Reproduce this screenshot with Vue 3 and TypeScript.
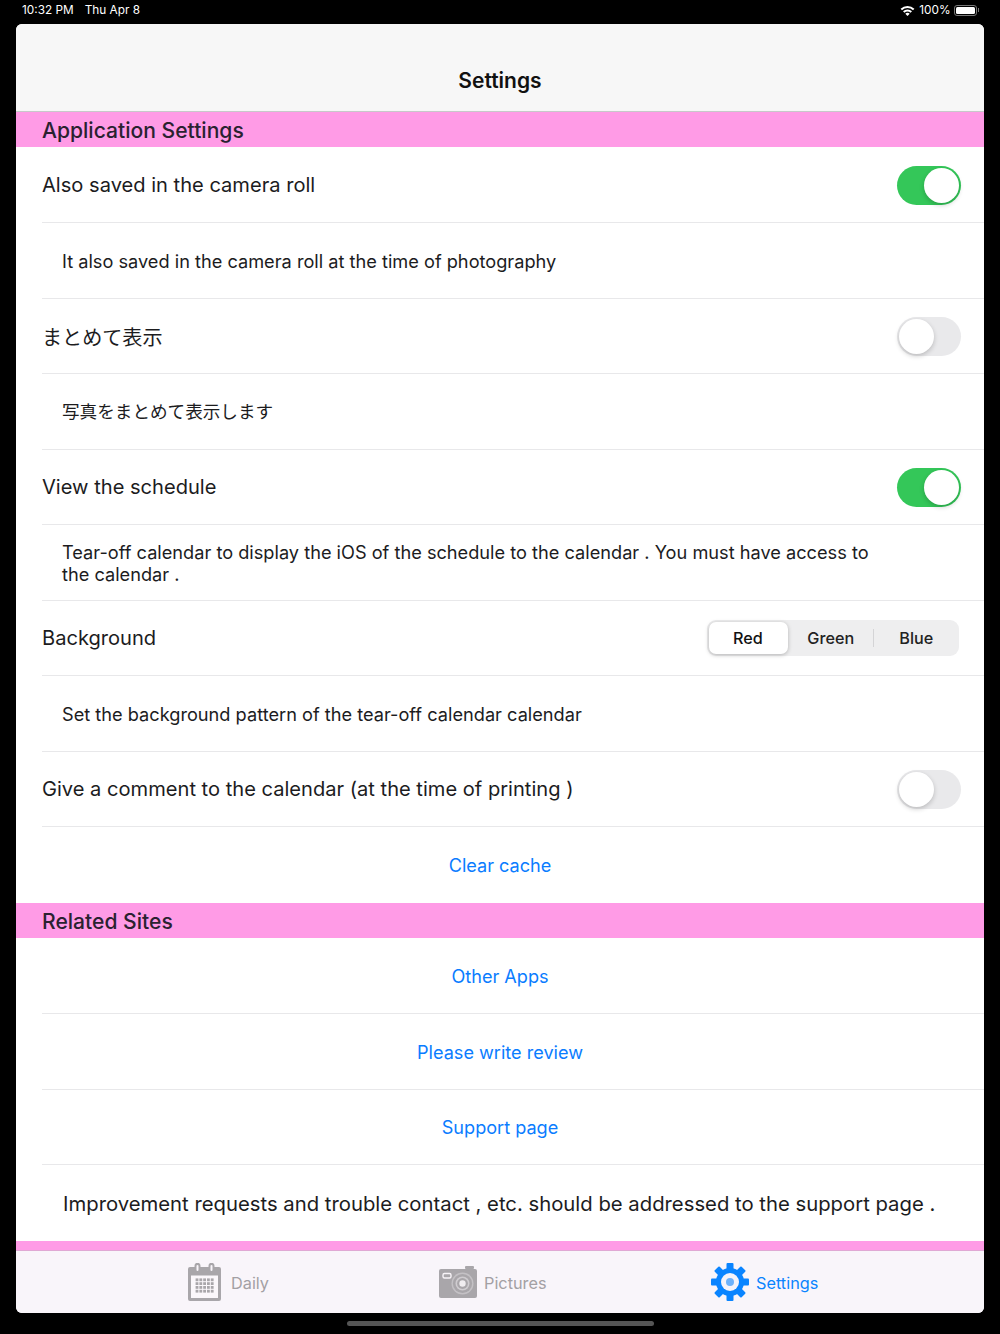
<script setup lang="ts">
interface Row { label: string; kind: 'toggle' | 'note' | 'segment' | 'link' | 'plain'; on?: boolean; last?: boolean; cjk?: boolean }
const settings: Row[] = [
  { label: 'Also saved in the camera roll', kind: 'toggle', on: true },
  { label: 'It also saved in the camera roll at the time of photography', kind: 'note' },
  { label: 'まとめて表示', kind: 'toggle', on: false },
  { label: '写真をまとめて表示します', kind: 'note', cjk: true },
  { label: 'View the schedule', kind: 'toggle', on: true },
  { label: 'Tear-off calendar to display the iOS of the schedule to the calendar . You must have access to the calendar .', kind: 'note' },
  { label: 'Background', kind: 'segment' },
  { label: 'Set the background pattern of the tear-off calendar calendar', kind: 'note' },
  { label: 'Give a comment to the calendar (at the time of printing )', kind: 'toggle', on: false },
  { label: 'Clear cache', kind: 'link', last: true }
]
const related: Row[] = [
  { label: 'Other Apps', kind: 'link' },
  { label: 'Please write review', kind: 'link' },
  { label: 'Support page', kind: 'link' },
  { label: 'Improvement requests and trouble contact , etc. should be addressed to the support page .', kind: 'plain', last: true }
]
const calDots: { x: number; y: number }[] = []
for (let r = 0; r < 4; r++) for (let c = 0; c < 5; c++) calDots.push({ x: 7.6 + c * 3.8, y: 15.4 + r * 3.8 })
const gearTeeth = [0, 45, 90, 135, 180, 225, 270, 315]
</script>

<template>
  <div class="screen">
    <div class="status">
      <div class="status-left"><span>10:32 PM</span><span>Thu Apr 8</span></div>
      <div class="status-right">
        <svg class="wifi" width="15" height="11" viewBox="0 0 15 11">
          <path d="M0.6 3.8A10 10 0 0 1 14.4 3.8L13 5.3A8 8 0 0 0 2 5.3Z" fill="#fff" />
          <path d="M3 6.3A6.6 6.6 0 0 1 12 6.3L10.6 7.8A4.6 4.6 0 0 0 4.4 7.8Z" fill="#fff" />
          <path d="M5.3 8.7A3.2 3.2 0 0 1 9.7 8.7L7.5 11Z" fill="#fff" />
        </svg>
        <span>100%</span>
        <span class="battery"><span class="battery-fill"></span></span>
        <span class="battery-cap"></span>
      </div>
    </div>

    <div class="sheet">
      <header class="nav">Settings</header>
      <div class="section">Application Settings</div>
      <div v-for="row in settings" :key="row.label" class="row" :class="[row.kind, { last: row.last, cjk: row.cjk }]">
        <span class="label">{{ row.label }}</span>
        <span v-if="row.kind === 'toggle'" class="switch" :class="{ on: row.on }"><span class="knob"></span></span>
        <div v-if="row.kind === 'segment'" class="seg">
          <span class="seg-item active">Red</span>
          <span class="seg-item">Green</span>
          <span class="seg-sep"></span>
          <span class="seg-item">Blue</span>
        </div>
      </div>
      <div class="section second">Related Sites</div>
      <div v-for="row in related" :key="row.label" class="row" :class="[row.kind, { last: row.last }]">
        <span class="label">{{ row.label }}</span>
      </div>
      <div class="footer-band"></div>
      <nav class="tabs">
        <div class="tab tab-daily">
          <svg width="33" height="38" viewBox="0 0 33 38">
            <path fill="#a9a6aa" fill-rule="evenodd" d="M2 4H6.5V2.8a3 3 0 0 1 6 0V4H20.5V2.8a3 3 0 0 1 6 0V4H31a2 2 0 0 1 2 2V36a2 2 0 0 1-2 2H2a2 2 0 0 1-2-2V6A2 2 0 0 1 2 4ZM8.5 3V7a1 1 0 0 0 2 0V3a1 1 0 0 0-2 0ZM22.5 3V7a1 1 0 0 0 2 0V3a1 1 0 0 0-2 0Z" />
            <rect x="3" y="12.5" width="27" height="22.5" fill="#fbf7fb" />
            <g fill="#a9a6aa">
              <rect v-for="d in calDots" :key="d.x + '-' + d.y" :x="d.x" :y="d.y" width="2.8" height="2.8" />
            </g>
          </svg>
          <span class="tab-text">Daily</span>
        </div>
        <div class="tab tab-pictures">
          <svg width="38" height="32" viewBox="0 0 38 32">
            <rect x="26" y="0" width="9" height="3" rx="1" fill="#a9a6aa" />
            <rect x="0" y="3" width="38" height="29" rx="2" fill="#a9a6aa" />
            <rect x="4" y="7.5" width="8" height="4.5" rx="1.5" fill="none" stroke="#f8f4f8" stroke-width="1.4" />
            <circle cx="23.5" cy="17.5" r="11" fill="#c4c1c5" />
            <circle cx="23.5" cy="17.5" r="9.6" fill="#a9a6aa" />
            <circle cx="23.5" cy="17.5" r="7" fill="#cfccd0" />
            <circle cx="23.5" cy="17.5" r="5.4" fill="#a9a6aa" />
            <circle cx="23.5" cy="17.5" r="3.2" fill="#f0edf0" />
          </svg>
          <span class="tab-text">Pictures</span>
        </div>
        <div class="tab tab-settings">
          <svg width="38" height="38" viewBox="0 0 38 38">
            <g fill="#0a84ff">
              <rect v-for="a in gearTeeth" :key="a" x="15.5" y="0" width="7" height="9" rx="1" :transform="`rotate(${a} 19 19)`" />
              <circle cx="19" cy="19" r="14" />
            </g>
            <circle cx="19" cy="19" r="9" fill="#f5f3fa" />
            <circle cx="19" cy="19" r="4" fill="#6db1fb" />
          </svg>
          <span class="tab-text active">Settings</span>
        </div>
      </nav>
    </div>
    <div class="home"><span class="home-bar"></span></div>
  </div>
</template>

<style>
html, body { margin: 0; background: #000; }
</style>

<style scoped>
.screen {
  width: 1000px;
  height: 1334px;
  background: #000;
  overflow: hidden;
  display: flex;
  flex-direction: column;
  font-family: Inter, "Noto Sans CJK JP", sans-serif;
  color: #1c1c1e;
}
.status {
  height: 24px;
  flex: none;
  display: flex;
  justify-content: space-between;
  align-items: center;
  padding: 0 21px 4px 22px;
  box-sizing: border-box;
  color: #fff;
  font-size: 11.8px;
}
.status-left { display: flex; gap: 11px; }
.status-right { display: flex; align-items: center; }
.wifi { margin-right: 4px; }
.battery {
  width: 23px;
  height: 11px;
  margin-left: 3px;
  border: 1px solid #777;
  border-radius: 3px;
  padding: 1px;
  box-sizing: border-box;
  display: flex;
}
.battery-fill { flex: 1; background: #fff; border-radius: 1.5px; }
.battery-cap { width: 1.5px; height: 4px; background: #777; margin-left: 1px; }
.sheet {
  margin: 0 16px;
  height: 1289px;
  flex: none;
  background: #fff;
  border-radius: 6px;
  overflow: hidden;
  display: flex;
  flex-direction: column;
}
.nav {
  height: 88px;
  flex: none;
  box-sizing: border-box;
  background: #f7f7f7;
  border-bottom: 1px solid #c8c8ca;
  display: flex;
  align-items: flex-end;
  justify-content: center;
  padding-bottom: 18px;
  font-size: 21px;
  font-weight: 600;
  color: #111;
}
.section {
  height: 35px;
  flex: none;
  margin-bottom: 0.5px;
  background: #ff9be6;
  padding: 1px 0 0 26px;
  line-height: 35px;
  font-size: 21.1px;
  font-weight: 500;
  color: #2a2230;
  box-sizing: border-box;
}
.section.second { margin-top: 0.5px; }
.row {
  height: 75.5px;
  flex: none;
  box-sizing: border-box;
  margin-left: 26px;
  padding: 1px 23px 0 0;
  display: flex;
  align-items: center;
  justify-content: space-between;
  border-bottom: 1px solid #e8e8ea;
  font-size: 20.1px;
  color: #1c1c1e;
}
.row.last { border-bottom: 0; }
.row.note { padding-left: 20px; padding-right: 90px; font-size: 18.2px; line-height: 22px; }
.row.note.cjk { font-size: 17.6px; }
.row.link { justify-content: center; padding-right: 26px; font-size: 18.1px; color: #0a7cff; }
.row.plain { padding-left: 21px; padding-right: 0; font-size: 20.3px; }
.switch {
  width: 64px;
  height: 39px;
  border-radius: 20px;
  background: #e9e9eb;
  position: relative;
  flex: none;
}
.switch.on { background: #34c759; }
.knob {
  position: absolute;
  top: 2px;
  left: 2px;
  width: 35px;
  height: 35px;
  border-radius: 50%;
  background: #fff;
  box-shadow: 0 2px 5px rgba(0, 0, 0, 0.2);
}
.switch.on .knob { left: 27px; }
.seg {
  width: 252px;
  height: 36px;
  margin-right: 2.5px;
  border-radius: 9px;
  background: #eeeeef;
  display: flex;
  align-items: center;
  font-size: 16.2px;
  font-weight: 500;
  color: #222;
}
.seg-item { flex: 1; text-align: center; line-height: 32px; }
.seg-item.active {
  flex: none;
  width: 79px;
  margin: 0 1px 0 2px;
  background: #fff;
  border-radius: 7px;
  box-shadow: 0 1px 4px rgba(0, 0, 0, 0.25);
  color: #111;
}
.seg-sep { width: 1px; height: 18px; background: #d4d4d6; }
.footer-band {
  height: 10px;
  flex: none;
  background: #ff9be6;
  border-bottom: 1px solid #e0a8d4;
  box-sizing: border-box;
}
.tabs {
  flex: 1;
  background: #f9f5fa;
  position: relative;
  display: flex;
}
.tab {
  position: absolute;
  top: 0;
  bottom: 0;
  display: flex;
  align-items: center;
  font-size: 16.3px;
}
.tab-daily { left: 172px; gap: 10px; }
.tab-pictures { left: 423px; gap: 7px; }
.tab-settings { left: 695px; gap: 7px; }
.tab-text { color: #a3a0a4; margin-top: 2px; }
.tab-text.active { color: #0a84ff; }
.home { flex: 1; display: flex; justify-content: center; align-items: center; }
.home-bar { width: 307px; height: 5px; border-radius: 3px; background: #555; }
</style>
